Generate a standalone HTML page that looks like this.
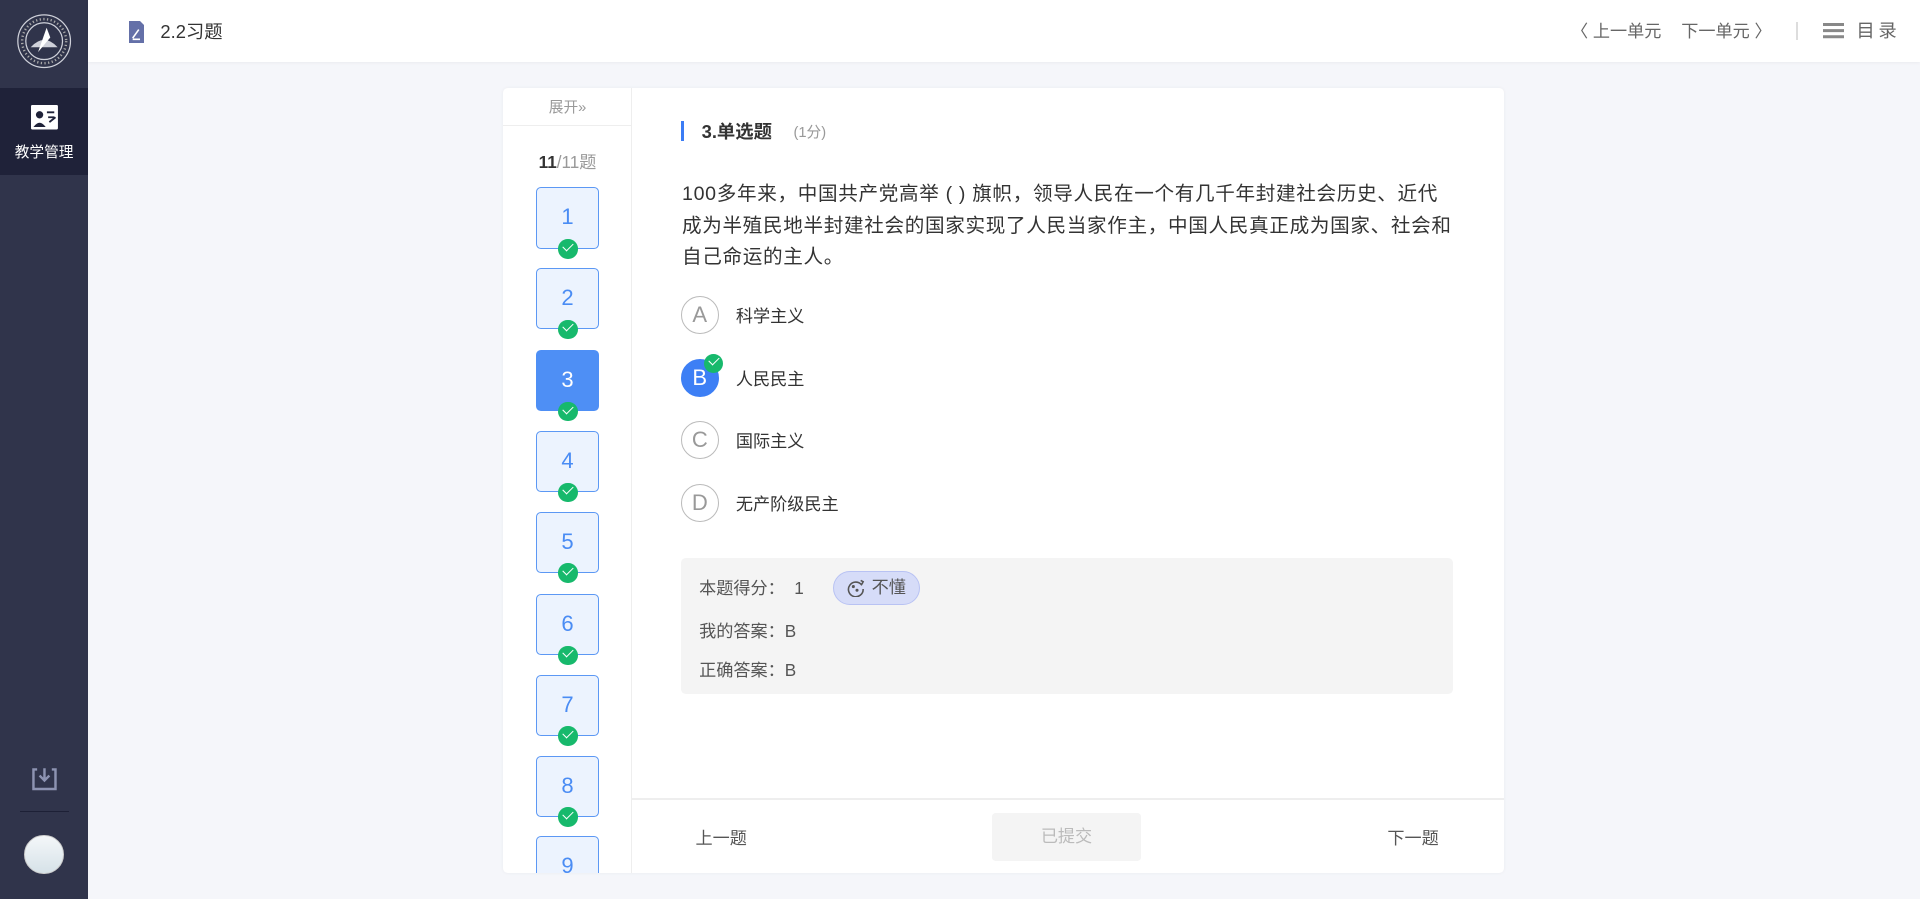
<!DOCTYPE html>
<html><head><meta charset="utf-8"><style>
html{zoom:1.22449}
*{margin:0;padding:0;box-sizing:border-box}
body{width:1568px;height:734px;overflow:hidden;background:#f5f6fa;font-family:"Liberation Sans","Noto Sans CJK SC",sans-serif;color:#333;position:relative}
.abs{position:absolute}
.side{left:0;top:0;width:72px;height:734px;background:#30344b}
.hdr{left:72px;top:0;width:1496px;height:51px;background:#fff;box-shadow:0 1px 3px rgba(0,0,0,.06)}
.card{left:411px;top:72px;width:817px;height:641px;background:#fff;border-radius:4px;box-shadow:0 0 3px rgba(0,0,0,.05)}
.qb{position:absolute;left:27px;width:51px;height:50px;border:1px solid #5c98f4;background:#ecf3fe;border-radius:4px;color:#4a8cf4;font-size:18px;text-align:center;line-height:48px}
.qb.on{background:#4e8ff5;color:#fff;border-color:#4e8ff5}
.ck{position:absolute;left:17px;bottom:-9px;width:16px;height:16px;border-radius:50%;background:#17b96c}
.ck:after{content:"";position:absolute;left:4px;top:3px;width:7px;height:4px;border-left:1.6px solid #fff;border-bottom:1.6px solid #fff;transform:rotate(-45deg)}
.opt{position:absolute;left:145px;width:31px;height:31px;border:1px solid #bbb;border-radius:50%;text-align:center;line-height:29px;font-size:18px;color:#999}
.ol{position:absolute;left:190px;font-size:14px;color:#333}
</style></head><body>
<div class="abs side">
  <svg class="abs" style="left:13px;top:11px" width="46" height="46" viewBox="0 0 46 46"><circle cx="23" cy="23" r="21.5" fill="none" stroke="#cfd1da" stroke-width="1"/><circle cx="23" cy="23" r="15" fill="none" stroke="#cfd1da" stroke-width="1"/><path d="M12 28 Q23 16 34 28 Z" fill="#cfd1da"/><path d="M25 12 L18 32 L28 20 Z" fill="#fff"/><circle cx="23" cy="23" r="18" fill="none" stroke="#aaa" stroke-width="2" stroke-dasharray="1 2"/></svg>
  <div class="abs" style="left:0;top:72px;width:72px;height:71px;background:#1f2239"></div>
  <svg class="abs" style="left:25px;top:86px" width="22" height="20" viewBox="0 0 22 20"><rect x="0" y="0" width="22" height="20" rx="1" fill="#fff"/><circle cx="7" cy="8" r="3" fill="#1f2239"/><path d="M2 18 Q7 11 12 18Z" fill="#1f2239"/><path d="M13 6h6M14 10h5M15 14l5-4" stroke="#1f2239" stroke-width="1.5"/></svg>
  <div class="abs" style="left:0;top:115px;width:72px;text-align:center;color:#fff;font-size:12px">教学管理</div>
  <svg class="abs" style="left:25px;top:626px" width="22" height="20" viewBox="0 0 22 20" fill="none" stroke="#8d93b2" stroke-width="2"><path d="M5 2H2v16h18V2h-3"/><path d="M11 1v10M7 7l4 4 4-4"/></svg>
  <div class="abs" style="left:16px;top:662px;width:40px;height:1px;background:#1d2036"></div>
  <div class="abs" style="left:20px;top:682px;width:32px;height:32px;border-radius:50%;background:linear-gradient(#f4f7f9,#d6e2e8);border:1px solid #ccc"></div>
</div>
<div class="abs hdr">
  <svg class="abs" style="left:33px;top:17px" width="13" height="18" viewBox="0 0 13 18"><path d="M0 0h9l4 4v14H0z" fill="#6470a8"/><path d="M3 14l5-7M3 15h6" stroke="#fff" stroke-width="1.3"/></svg>
  <div class="abs" style="left:59px;top:15px;font-size:15px;color:#333">2.2习题</div>
  <div class="abs" style="left:1211px;top:14px;font-size:14px;color:#666">〈 上一单元</div>
  <div class="abs" style="left:1301px;top:14px;font-size:14px;color:#666">下一单元 〉</div>
  <div class="abs" style="left:1395px;top:18px;width:1px;height:15px;background:#ddd"></div>
  <div class="abs" style="left:1417px;top:19px;width:17px;height:2px;background:#888;box-shadow:0 5px 0 #888,0 10px 0 #888"></div>
  <div class="abs" style="left:1444px;top:14px;font-size:15px;color:#666;letter-spacing:3px">目录</div>
</div>
<div class="abs card">
  <div class="abs" style="left:0;top:0;width:105px;height:641px;border-right:1px solid #eee">
    <div class="abs" style="left:0;top:6px;width:105px;text-align:center;font-size:12px;color:#999">展开»</div>
    <div class="abs" style="left:0;top:30px;width:105px;height:1px;background:#eee"></div>
    <div class="abs" style="left:0;top:49px;width:105px;text-align:center;font-size:14px;color:#999"><b style="color:#333">11</b>/11题</div>
    <div class="qb" style="top:81px">1<i class="ck"></i></div>
    <div class="qb" style="top:147px">2<i class="ck"></i></div>
    <div class="qb on" style="top:214px">3<i class="ck"></i></div>
    <div class="qb" style="top:280px">4<i class="ck"></i></div>
    <div class="qb" style="top:346px">5<i class="ck"></i></div>
    <div class="qb" style="top:413px">6<i class="ck"></i></div>
    <div class="qb" style="top:479px">7<i class="ck"></i></div>
    <div class="qb" style="top:545px">8<i class="ck"></i></div>
    <div class="qb" style="top:611px;height:30px;border-bottom:none;border-radius:4px 4px 0 0">9</div>
  </div>
  <div class="abs" style="left:145px;top:27px;width:3px;height:16px;background:#3b7cf5"></div>
  <div class="abs" style="left:162px;top:24px;font-size:15px;font-weight:bold;color:#333">3.单选题</div>
  <div class="abs" style="left:237px;top:27px;font-size:12px;color:#999">(1分)</div>
  <div class="abs" style="left:146px;top:74px;width:680px;font-size:16px;line-height:26px;color:#333;white-space:nowrap;letter-spacing:0.55px">100多年来，中国共产党高举 ( ) 旗帜，领导人民在一个有几千年封建社会历史、近代<br>成为半殖民地半封建社会的国家实现了人民当家作主，中国人民真正成为国家、社会和<br>自己命运的主人。</div>
  <div class="opt" style="top:170px">A</div><div class="ol" style="top:175px">科学主义</div>
  <div class="opt" style="top:221px;background:#3d7ff5;border-color:#3d7ff5;color:#fff">B<i class="ck" style="left:18px;top:-5px;bottom:auto"></i></div><div class="ol" style="top:226px">人民民主</div>
  <div class="opt" style="top:272px">C</div><div class="ol" style="top:277px">国际主义</div>
  <div class="opt" style="top:323px">D</div><div class="ol" style="top:328px">无产阶级民主</div>
  <div class="abs" style="left:145px;top:384px;width:631px;height:111px;background:#f4f4f4;border-radius:4px">
    <div class="abs" style="left:15px;top:13px;font-size:14px;color:#555">本题得分：&nbsp; 1</div>
    <div class="abs" style="left:124px;top:10px;width:71px;height:28px;border-radius:14px;background:#d6dcf8;border:1px solid #b8c2f3;font-size:14px;color:#555;line-height:26px;padding-left:31px">不懂
      <svg class="abs" style="left:10px;top:5px" width="16" height="16" viewBox="0 0 16 16" fill="none" stroke="#555" stroke-width="1.3"><path d="M13 6A6 6 0 1 0 14 9"/><circle cx="6" cy="7" r=".6" fill="#555"/><circle cx="9" cy="10" r=".6" fill="#555"/><path d="M12 2l2 1-1 2"/></svg></div>
    <div class="abs" style="left:15px;top:48px;font-size:14px;color:#555">我的答案：B</div>
    <div class="abs" style="left:15px;top:80px;font-size:14px;color:#555">正确答案：B</div>
  </div>
  <div class="abs" style="left:105px;top:580px;width:712px;height:1px;background:#eee"></div>
  <div class="abs" style="left:157px;top:601px;font-size:14px;color:#555">上一题</div>
  <div class="abs" style="left:399px;top:592px;width:122px;height:39px;background:#f4f4f4;border-radius:3px;text-align:center;line-height:39px;font-size:14px;color:#bbb">已提交</div>
  <div class="abs" style="left:722px;top:601px;font-size:14px;color:#555">下一题</div>
</div>
</body></html>
